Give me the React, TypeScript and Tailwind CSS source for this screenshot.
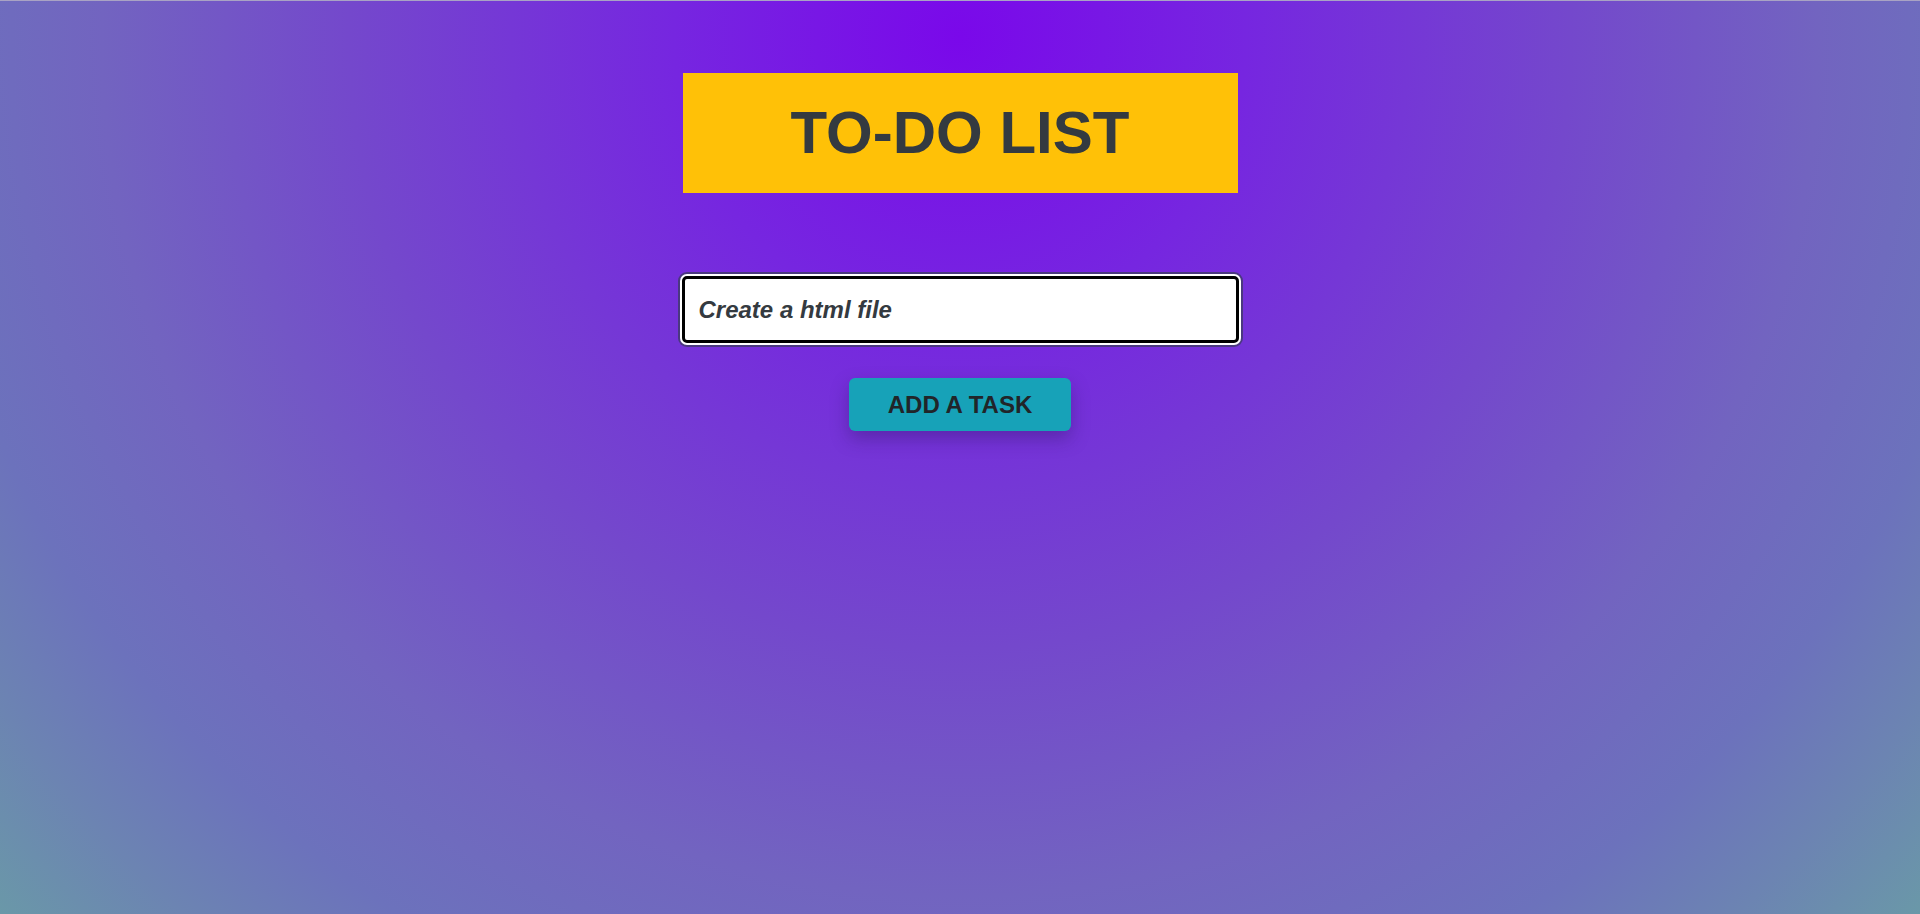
import { useState } from "react";

const App = () => {
  const [task, setTask] = useState("Create a html file");

  return (
    <div className="flex min-h-[914px] w-full flex-col items-center border-t border-[#a9a3c4] bg-[radial-gradient(circle_farthest-corner_at_50%_4%,#7a08ea_0%,#7626e0_22%,#7448cc_47%,#7264c0_66%,#6c72bc_80%,#6c84b2_90%,#6a98a8_100%)] pt-[72px] font-['Liberation_Sans',Arial,sans-serif]">
      <h1 className="flex h-[120px] w-[555px] items-center justify-center bg-[#ffc107] text-[60px] font-bold text-[#343a40]">
        TO-DO LIST
      </h1>
      <input
        value={task}
        onChange={(e) => setTask(e.target.value)}
        className="mt-[83px] h-[67px] w-[557px] rounded-[5px] border-[3px] border-black bg-white px-[14px] text-[24px] font-bold italic text-[#343a40] shadow-[0_0_0_2px_#ffffff,0_0_0_4px_#4a3880] outline-none"
      />
      <button className="mt-[35px] h-[53px] w-[222px] rounded-[6px] bg-[#17a2b8] text-[24px] font-bold text-[#212529] shadow-[0_8px_18px_rgba(40,20,90,0.35)]">
        ADD A TASK
      </button>
    </div>
  );
};

export default App;
